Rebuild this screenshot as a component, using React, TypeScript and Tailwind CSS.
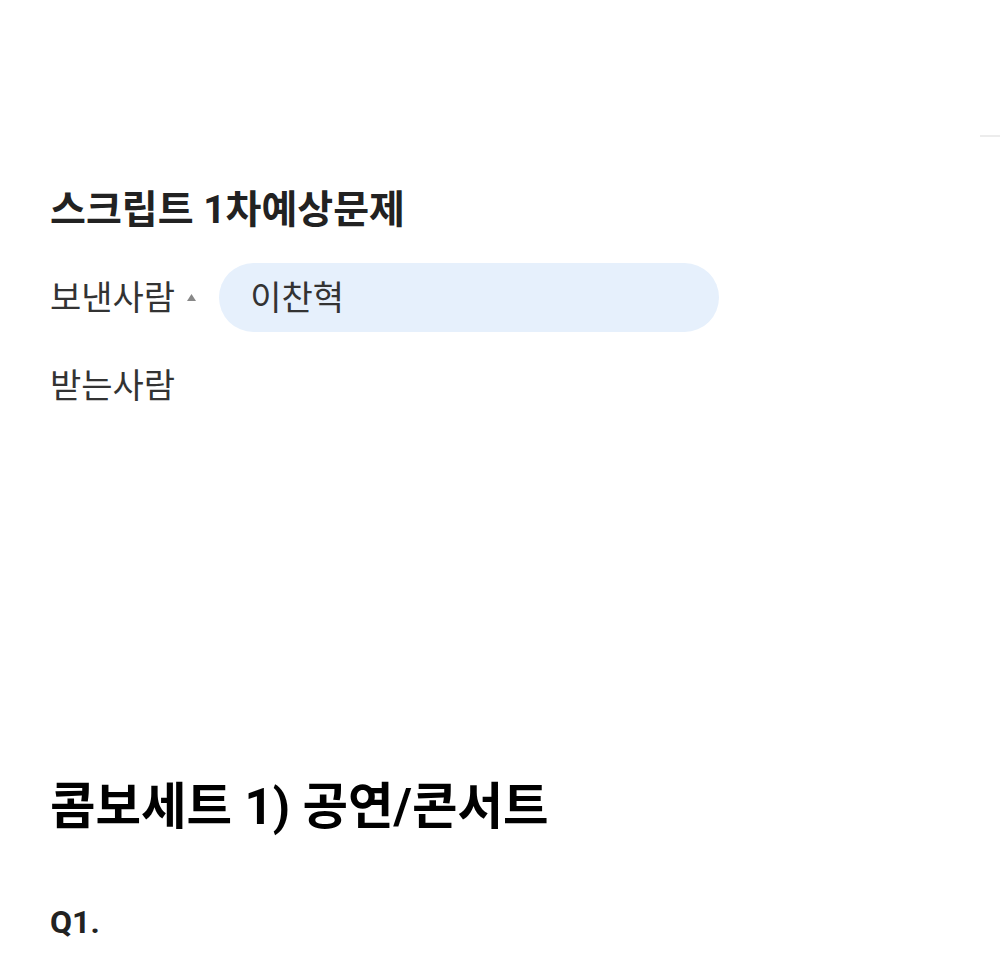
export default function App() {
  return (
    <main
      className="min-h-screen bg-white text-[#222]"
      style={{ fontFamily: 'Roboto, "Noto Sans CJK KR", sans-serif' }}
    >
      <div className="flex justify-end pt-[135px]">
        <div className="h-[2px] w-[20px] bg-[#ececec]" />
      </div>

      <section className="px-[50px] pt-[46px]">
        <h1 className="text-[39px] font-bold leading-[54px] text-[#222]">스크립트 1차예상문제</h1>

        <div className="mt-[26px] flex items-center">
          <span className="text-[34px] leading-[40px] text-[#333]">보낸사람</span>
          <svg className="ml-[12px] mr-[23px]" width="9" height="7" viewBox="0 0 9 7">
            <path d="M4.5 0 L9 7 L0 7 Z" fill="#888" />
          </svg>
          <div className="flex h-[69px] w-[500px] items-center rounded-full bg-[#e6f0fc] px-[31px]">
            <span className="text-[34px] leading-[40px] text-[#333]">이찬혁</span>
          </div>
        </div>

        <div className="mt-[34px] text-[34px] leading-[40px] text-[#333]">받는사람</div>
      </section>

      <section className="px-[50px] pt-[369px]">
        <h2 className="text-[49.5px] font-bold leading-[64px] text-black">콤보세트 1) 공연/콘서트</h2>
        <p className="mt-[63px] text-[32px] font-bold leading-[40px] text-[#222]">Q1.</p>
      </section>
    </main>
  );
}
